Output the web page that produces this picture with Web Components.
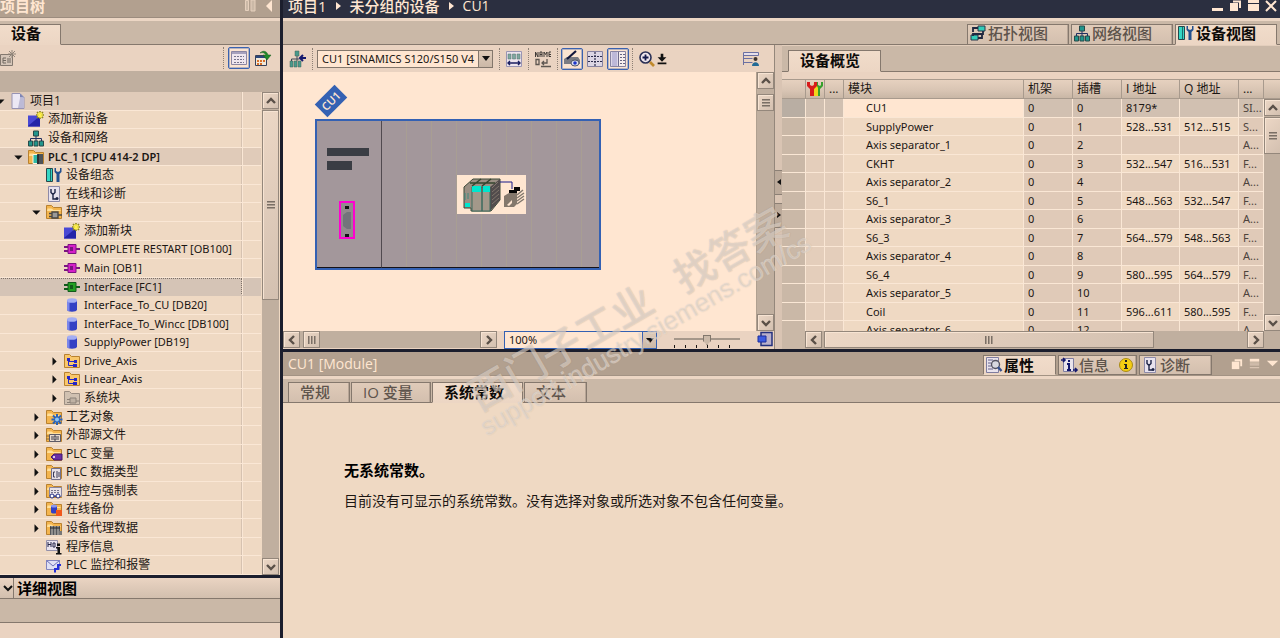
<!DOCTYPE html>
<html lang="zh-CN">
<head>
<meta charset="utf-8">
<title>项目1 - CU1</title>
<style>
:root{
  --ink:#1b1613;--paper:#ffe6d1;--panel:#efd9c3;--bar:#ead3c1;--strip:#cab8a7;--deep:#c0af9f;
  --title:#b2a08f;--night:#2b2f40;--line:#85786d;--blue:#3a62b0;
  font-family:"Open Sans","Noto Sans CJK SC",sans-serif;font-size:12px;line-height:16px;color:var(--ink);
}
body{margin:0;height:100vh;overflow:hidden;background:var(--panel)}
</style>
</head>
<body>
<tia-app></tia-app>
<script>
function define(name, html, ready){
  const t=document.createElement('template');
  t.innerHTML='<style>*{box-sizing:border-box}button,select,input{font:inherit;color:inherit;margin:0}button{background:none;border:0;padding:0}</style>'+html;
  customElements.define(name,class extends HTMLElement{
    connectedCallback(){
      if(this.shadowRoot)return;
      const r=this.attachShadow({mode:'open'});
      r.append(t.content.cloneNode(true));
      if(ready)ready.call(this,r);
    }
  });
}

const folder='<path d="M.5 1.5h5l2 2h8v11H.5z" fill="#f4b54e" stroke="#b9812e"/><path d="M1.5 4.5h4l2 1.500h7v1H1z" fill="#ffdf9a"/>';
const block=(a,b)=>`<path d="M0 6h5M0 10h5M11 8h5" stroke="${b}" stroke-width="2"/><path d="M4 3.500h8v9H4z" fill="${a}" stroke="${b}"/><path d="M6 6h3v4H6z" fill="${b}"/>`;
const star='<path d="M12 0v8M8 4h8M9 1l6 6M15 1L9 7" stroke="#8f8a18" stroke-width="1.600"/><path d="M12 1v6M9 4h6M10 2l4 4M14 2l-4 4" stroke="#fff04a" stroke-width="1.200"/>';
const db='<path d="M3 3.500v9c0 3 10 3 10 0v-9z" fill="#3340c4"/><path d="M3 3.500v9c0 1 1 1.500 2.500 2V4z" fill="#7a86ea"/><ellipse cx="8" cy="3.500" rx="5" ry="2.300" fill="#a3adf3"/>';
const group='<path d="M.5 1.5h5l2 2h8v11H.5z" fill="#f9c76b" stroke="#b9812e"/><path d="M4.500 7v5.500H9M5 8.500h5" stroke="#2525c8" fill="none" stroke-width="1"/><path d="M3 5h3v3H3zM10 7h3v3h-3zM9 11h4v3H9z" fill="#2525c8"/>';
const net='<path d="M5.500 1h5v5h-5zM.500 11h4v5h-4zM6 11h4v5H6zM11.500 11h4v5h-4z" fill="#21968c" stroke="#274a4a"/><path d="M8 6v5M2.500 11V8.500h11V11" stroke="#223060" fill="none"/>';
const dev='<path d="M.500 1.500h6v13h-6z" fill="#35d6c4" stroke="#26474b"/><path d="M4.500 2v12" stroke="#1c6d6b"/><path d="M8.500 1v4l2 2v8h3V7l2-2V1h-1.500v3l-2 1-2-1V1z" fill="#23508f"/>';
const diag='<path d="M2.500.500h11v15h-11z" fill="#e8e2ee" stroke="#8d8aa8"/><path d="M5 3v3.500l2 2 2-2V3M7 9v4h3" stroke="#1d2346" fill="none" stroke-width="1.400"/><circle cx="11" cy="12.500" r="1.500" fill="#1d2346"/>';
const grid='<path d="M.500 1.500h15v13H.500z" fill="#efe6ee" stroke="#8b86a3"/><path d="M1 2h14v2H1z" fill="#a7a1bd"/><path d="M3 6.500h10M3 9.500h10M3 12.500h10" stroke="#77748c" stroke-dasharray="2 1"/>';
const ICONS={
  page:'<path d="M2 .500h8l4 4v11H2z" fill="#ece8f5" stroke="#9793b4"/><path d="M10 .500l4 4h-4z" fill="#7d84b4"/><path d="M10 5h3.500v10H8z" fill="#bcbad6"/>',
  add:'<path d="M0 4.500h12v11H0z" fill="#4848d4"/><path d="M0 15L12 5v10.500H0z" fill="#2323a8"/>'+star,
  net,dev,diag,grid,db,group,
  plc:folder+'<path d="M5 5.500h5v9H5z" fill="#2fb8a6" stroke="#fff3dd"/><path d="M9 5h6v10H9z" fill="#4c535a"/><path d="M9 15V6l2-1v10z" fill="#2b2f33"/>',
  blocks:folder+'<path d="M6 8h6v6H6zM3 9.500h3M3 12.500h3M12 11h4" fill="#9b9a98" stroke="#4a4846" stroke-width="1.400"/>',
  sys:'<path d="M.500 1.500h5l2 2h8v11H.500z" fill="#d0c1b1" stroke="#9b8e82"/><path d="M6 8h6v5H6zM3 9.500h3M3 12.500h3M12 11h3" fill="#bfb2a4" stroke="#8c8278"/>',
  ob:block('#d420c8','#7a1480'),fc:block('#22a022','#125a1c'),
  tech:folder+'<path d="M11 5v11M5.500 10.500h11M7 6.500l8 8M15 6.500l-8 8" stroke="#2a62b8" stroke-width="2"/><circle cx="11" cy="10.500" r="2" fill="#8ec6f2"/>',
  ext:folder+'<path d="M3.500 7.500h11v7h-11z" fill="#e9dccf" stroke="#5c5a66"/><path d="M6 9v4M8 9h2v4H8zM12 9v4" stroke="#3a3a48" fill="none"/><path d="M0 9h3M0 12h3" stroke="#8b6b38"/>',
  tag:folder+'<path d="M5 11l3-3h8v6H8z" fill="#6a2fa5" stroke="#421770"/><circle cx="8" cy="11" r="1" fill="#fff"/>',
  type:folder+'<path d="M5.500 4.500h9v11h-9z" fill="#e5dfe6" stroke="#73718c"/><path d="M9 8H7.500v5H9M11 7v7M13 8v5" stroke="#3c3d58" fill="none"/>',
  watch:folder+'<path d="M3.500 4.500h12v9h-12z" fill="#e8e2e8" stroke="#8986a0"/><path d="M5 7.500h9M5 9.500h9" stroke="#77748c" stroke-dasharray="2 1"/><circle cx="6" cy="13" r="2" fill="#fff" stroke="#202a80"/><circle cx="12" cy="13" r="2" fill="#fff" stroke="#202a80"/><path d="M8 13h2" stroke="#202a80"/>',
  backup:folder+'<path d="M5 5v6c0 2 6 2 6 0V5z" fill="#3340c4"/><ellipse cx="8" cy="5" rx="3" ry="1.500" fill="#8e98ee"/><path d="M10 9h6v6h-6z" fill="#f0581c"/>',
  proxy:folder+'<path d="M4 6h10v9H4z" fill="#55585c"/><path d="M6 6v9M9 6v9M12 6v9" stroke="#c9c5bf"/><path d="M4 8h10" stroke="#26282b"/><path d="M13 11h3v4h-3z" fill="#777"/>',
  info:'<path d="M.500 1.500h11v10H.500z" fill="#e9e4ef" stroke="#9390aa"/><path d="M2 3v5M2 5.500h3M5 3v5M7 4h2v4H7z" stroke="#24264a" fill="none"/><path d="M11 8h3v6h1.500v1.500H10V14h1.500v-4.500H10V8zM11 4.500h3v2.500h-3z" fill="#111"/>',
  mail:'<path d="M.500 3.500h13v9H.500z" fill="#dfe0f4" stroke="#8184be"/><path d="M.500 3.500L7 9l6.500-5.500" stroke="#6c70b8" fill="none"/><path d="M9 15.500V12h3V8h3" stroke="#2530d8" stroke-width="2" fill="none"/>',
  newgrp:'<path d="M.500 4.500h12v11h-12z" fill="#d5c5b8" stroke="#83786f"/><path d="M3 8v5M3 8h3M3 10.500h3M3 13h3M8 8v5M10 8v5" stroke="#716860"/><path d="M12 0v8M8 4h8M9 1l6 6M15 1L9 7" stroke="#92867b"/>',
  export:'<path d="M.500 5.500h11v10H.500z" fill="#f2e8d8" stroke="#37405a"/><path d="M1 6h10v2H1z" fill="#2b477c"/><path d="M2 10h2v2H2zM5 10h2v2H5zM8 10h2v2H8zM2 13h2v2H2zM5 13h2v2H5z" fill="#d8702a"/><path d="M5 3c3-3 7-2 8 2h3l-4 5-4-5h3C10 3 8 2 5 3z" fill="#1f8a2a" stroke="#14591b" stroke-width=".500"/>',
  gonet:'<path d="M5 0h4v5H5zM0 10h3v6H0zM4 10h3v6H4zM8 10h3v6H8z" fill="#4a9a8c" stroke="#44605a" stroke-width=".500"/><path d="M7 5v5M1.500 10V8h8" stroke="#3f4656" fill="none"/><path d="M16 7h-5M13 4l-3 3 3 3" stroke="#15196e" stroke-width="2" fill="none"/>',
  modules:'<path d="M.500.500h15v15H.500z" fill="#ece3ec" stroke="#9a95b3"/><path d="M2 3h3v5H2zM6.500 3h3v5h-3zM11 3h3v5h-3z" fill="#7fa8a0" stroke="#55706c" stroke-width=".500"/><path d="M2 12h12M4 10l-2 2 2 2M12 10l2 2-2 2" stroke="#1a1e60" stroke-width="1.400" fill="none"/>',
  name:'<path d="M.500 6V1l2.500 5V1M5 6V1h2v5M5 3.500h2M9 6V1l1.500 2.500L12 1v5M16 1h-2v4.500h2M14 3.500h2" stroke="#3f3a36" fill="none"/><path d="M1 8.500h3v5H1zM12 8v4H7M9 10l-2 2 2 2M6 15.500h10" stroke="#5e5751" fill="none" stroke-width="1.300"/>',
  edit:'<path d="M0 8l3-2h11l2 3v4H0z" fill="#7a7b83"/><path d="M3 8L12 0" stroke="#11163c" stroke-width="2.200"/><ellipse cx="11" cy="12" rx="4" ry="3" fill="#dfe3f2" stroke="#4d5568"/><circle cx="11" cy="12" r="1.800" fill="#1d36c8"/>',
  dots:'<path d="M.500.500h15v15H.500z" fill="#dcd6e4" stroke="#8884a2"/><path d="M8 1v14M1 5.500h14M1 10.500h14" stroke="#2d2d4c" stroke-dasharray="2 1" stroke-width="1.200"/>',
  pane:'<path d="M.500.500h15v15H.500z" fill="#ddd7e8" stroke="#8884a2"/><path d="M2 1h5v14H2z" fill="#bdb8d8"/><path d="M8 1h7v14H8z" fill="#f6eeee"/><path d="M8.500 1v14" stroke="#6d6a8a"/><path d="M10 3.500h5M10 6.500h5M10 9.500h5M10 12.500h5" stroke="#666380" stroke-dasharray="2 1"/>',
  zoom:'<circle cx="6.500" cy="6.500" r="5.500" fill="#efe6ec" stroke="#2b3156" stroke-width="1.600"/><path d="M3.500 6.500h6M6.500 3.500v6" stroke="#141a4c" stroke-width="1.800"/><path d="M11 11l4 4" stroke="#c08a2c" stroke-width="2.600"/>',
  fit:'<path d="M6.500 2h3v4H13l-5 5-5-5h3.500zM3 12h10v2H3z" fill="#111"/>',
  user:'<path d="M.500 1.500h15v3H.500zM.500 7.500h9M.500 11.500h9M.500 2v12" fill="#e6dfea" stroke="#6b70a2"/><circle cx="12.500" cy="8" r="2" fill="#3e3430"/><path d="M9 15c0-5 7-5 7 0z" fill="#236b96"/>',
  topo:'<path d="M8 1h7v5H8zM1 10h7v5H1z" fill="#32ccb8" stroke="#29374a"/><path d="M8 3H3v4M13 6v3H3v2M8 13h4V9" stroke="#1f2740" stroke-width="1.800" fill="none"/>',
  wrench:'<path d="M9 1v4l1 2v8h3V8l3-3V1h-2v3l-1 1-2-1V1z" fill="#35a02c"/><path d="M7 1l3 4 1 2v8H6V8z" fill="#f3d51c"/><path d="M0 1v4l3 3v7h4V8l3-3V1H7v3L5 5 3 4V1z" fill="#d81c1c"/>',
  props:'<path d="M.500.500h12v15H.500z" fill="#e9e3ec" stroke="#7f7da0"/><path d="M2 3h5M2 6h3M2 9h3M2 12h5" stroke="#62618a"/><circle cx="9.500" cy="7.500" r="4" fill="#d8d8e0" stroke="#555361" stroke-width="1.400"/><path d="M12 10l3.500 4" stroke="#35508f" stroke-width="2.400"/>',
  msg:'<path d="M2.500 1.500h10v13h-10z" fill="#e9e3ec" stroke="#7f7da0"/><path d="M0 3h4M2 1l2 2-2 2M12 13h4M14 11l2 2-2 2" stroke="#15196e" stroke-width="1.600" fill="none"/><path d="M8 3v2M6 7h2v6M6 13h4" stroke="#15196e" stroke-width="2" fill="none"/>',
  corner:'<path d="M4 1.500h11v13H4z" fill="#b9b0ca" stroke="#23307e" stroke-width="1.500"/><path d="M1 5h8v6H1z" fill="#3c5be0" stroke="#1c2f9c"/>',
  left:'<path d="M10 4L6 8l4 4" stroke="#5a5048" stroke-width="2.400" fill="none"/>',
  right:'<path d="M6 4l4 4-4 4" stroke="#5a5048" stroke-width="2.400" fill="none"/>',
  up:'<path d="M4 10l4-4 4 4" stroke="#5a5048" stroke-width="2.400" fill="none"/>',
  down:'<path d="M4 6l4 4 4-4" stroke="#5a5048" stroke-width="2.400" fill="none"/>',
  chev:'<path d="M4 6l4 4 4-4" stroke="#111" stroke-width="2" fill="none"/>',
  closed:'<path d="M6 3l5.500 5.500L6 14z" fill="#111"/>',
  open:'<path d="M3 6h11l-5.500 5.500z" fill="#111"/>',
  wmin:'<path d="M3 11h11v3H3z" fill="#ffe6d1"/>',
  wdup:'<path d="M3 6h8v8H3z" fill="#ffe6d1"/><path d="M6 4.500h7V11" stroke="#ffe6d1" stroke-width="2" fill="none"/>',
  wmax:'<path d="M3 3h11v3H3zM3 7h11v7H3z" fill="#ffe6d1"/>',
  wx:'<path d="M3 4l10 10M13 4L3 14" stroke="#ffe6d1" stroke-width="2"/>',
  wlist:'<path d="M3 3h10v3H3z" fill="#ffe6d1"/><path d="M3 7.500h10M3 9.500h10M3 12.500h10" stroke="#e8d2bf"/>',
  wtri:'<path d="M2 5h12l-6 6z" fill="#ffe6d1"/>',
  badge:'<circle cx="8" cy="8" r="6.500" fill="#f4cd12" stroke="#a88a18"/><path d="M7 3h2v2H7zM6 7h3v4h1v1H6v-1h1V8H6z" fill="#222"/>'
};
define('tia-icon','<style>:host{display:block;flex:none;width:16px;height:16px}svg{display:block;width:100%;height:100%;overflow:visible}</style><svg viewBox="0 0 16 16" aria-hidden="true"></svg>',function(r){
  r.querySelector('svg').innerHTML=ICONS[this.getAttribute('name')]||'';
});

/* One tab of a tab strip; "on" marks the selected one. */
define('tia-tab',`<style>
:host{display:block;font-size:15px;font-weight:500;color:#5e544c}
:host([on]){color:#0c0a08;font-weight:700}
button{display:flex;align-items:center;gap:2px;width:100%;height:100%;padding:var(--tab-pad,0 11px 4px);white-space:nowrap;
 background:linear-gradient(#e0cbb9,#d3bfae);border:1px solid var(--line);box-shadow:inset -1px 0 #b7a596}
:host([on]) button{background:linear-gradient(#f1dcca,#ecd6c4);border-bottom-color:#ecd6c4;box-shadow:none}
</style><button type="button" role="tab"><slot></slot></button>`,function(r){
  r.querySelector('button').setAttribute('aria-selected',this.hasAttribute('on'));
});

/* Scrollbar: --lead is the gap before the thumb, --thumb its length. */
define('tia-scroll',`<style>
:host{display:flex;flex-direction:column;background:var(--deep);width:17px}
:host([across]){flex-direction:row;width:auto;height:17px}
button,.thumb{flex:none;display:grid;place-items:center;width:17px;height:17px;border:1px solid #94877b;background:linear-gradient(135deg,#ecd7c5,#d3c0b0);box-shadow:inset 1px 1px #f7e4d3;overflow:hidden}
.thumb{height:var(--thumb);margin-top:var(--lead)}
:host([across]) .thumb{height:17px;width:var(--thumb);margin:0 0 0 var(--lead)}
.rest{flex:1}
.grip{width:8px;height:8px;background:repeating-linear-gradient(#7b6f65 0 1px,#a99b8e 1px 2px,transparent 2px 3px)}
:host([across]) .grip{background:repeating-linear-gradient(90deg,#7b6f65 0 1px,#a99b8e 1px 2px,transparent 2px 3px)}
</style><button type="button"></button><div class="thumb"><div class="grip"></div></div><div class="rest"></div><button type="button"></button>`,function(r){
  const h=this.hasAttribute('across'),i=r.querySelectorAll('button');
  [[i[0],h?'left':'up'],[i[1],h?'right':'down']].forEach(([b,n])=>{b.innerHTML=`<tia-icon name="${n}"></tia-icon>`;b.setAttribute('aria-label',n)});
});

define('tia-combo',`<style>
:host{display:block;position:relative;height:18px;font-family:"Noto Sans","Noto Sans CJK SC",sans-serif;font-size:11px}
select{appearance:none;width:100%;height:100%;border:1px solid var(--combo-line,#83776c);border-radius:0;background:var(--paper);padding:0 15px 0 4px;overflow:hidden;text-overflow:clip;white-space:nowrap}
span{position:absolute;right:1px;top:1px;bottom:1px;width:14px;background:linear-gradient(#e0ccba,#cbb8a7);border-left:1px solid var(--combo-line,#83776c);pointer-events:none;display:grid;place-items:center}
</style><select><option></option></select><span><svg width="8" height="5" viewBox="0 0 8 5"><path d="M0 0h8L4 5z" fill="#111"/></svg></span>`,function(r){
  r.querySelector('option').textContent=this.getAttribute('value');
  r.querySelector('select').setAttribute('aria-label',this.getAttribute('label'));
});

define('tia-tool',`<style>
:host{display:block;width:22px;height:22px;flex:none}
button{width:100%;height:100%;display:grid;place-items:center;border:1px solid transparent}
:host([on]) button{border:1px solid var(--blue);border-radius:2px;background:#fbe4d1;box-shadow:inset 0 0 0 1px #b5b3c0}
</style><button type="button"></button>`,function(r){
  const b=r.querySelector('button');b.setAttribute('aria-label',this.getAttribute('icon'));
  b.innerHTML=`<tia-icon name="${this.getAttribute('icon')}"></tia-icon>`;
});

define('tia-tree-row',`<style>
:host{display:grid;grid-template-columns:1fr 19px;background:var(--panel);border-bottom:1px solid #fae7d5;overflow:hidden;min-height:0}
:host([head]){background:#e0cbb9}
:host([sel]){background:#d5c4b6;border-bottom-color:#d5c4b6}
.main{display:flex;align-items:center;min-width:0;white-space:nowrap;border-right:1px solid #d6c2b0}
:host([sel]) .main{border:1px dotted #7c7067;border-left:0}
.arrow{width:12px;margin:0 4px 0 -2px;flex:none;display:flex}
.arrow tia-icon{width:12px;height:12px}
.pic{width:16px;height:16px;margin-right:4px}
.side{border-left:1px solid #fae7d5}
:host([latin]){font-family:"Noto Sans",sans-serif;font-size:11px}
:host([bold]) .text{font-weight:600}
</style><div class="main"><span class="arrow"></span><span class="text"><slot></slot></span></div><div class="side"></div>`,function(r){
  const g=n=>this.getAttribute(n);
  r.querySelector('.main').style.paddingLeft=18*g('level')+'px';
  if(g('state'))r.querySelector('.arrow').innerHTML=`<tia-icon name="${g('state')}"></tia-icon>`;
  const p=document.createElement('tia-icon');p.className='pic';p.setAttribute('name',g('icon'));
  r.querySelector('.text').before(p);
});

const TREE=[
 [0,'open','page','项目1','head'],[1,'','add','添加新设备'],[1,'','net','设备和网络'],[1,'open','plc','PLC_1 [CPU 414-2 DP]','head bold latin'],
 [2,'','dev','设备组态'],[2,'','diag','在线和诊断'],[2,'open','blocks','程序块'],[3,'','add','添加新块'],
 [3,'','ob','COMPLETE RESTART [OB100]','latin'],[3,'','ob','Main [OB1]','latin'],[3,'','fc','InterFace [FC1]','sel latin'],
 [3,'','db','InterFace_To_CU [DB20]','latin'],[3,'','db','InterFace_To_Wincc [DB100]','latin'],[3,'','db','SupplyPower [DB19]','latin'],
 [3,'closed','group','Drive_Axis','latin'],[3,'closed','group','Linear_Axis','latin'],[3,'closed','sys','系统块'],
 [2,'closed','tech','工艺对象'],[2,'closed','ext','外部源文件'],[2,'closed','tag','PLC 变量'],[2,'closed','type','PLC 数据类型'],
 [2,'closed','watch','监控与强制表'],[2,'closed','backup','在线备份'],[2,'closed','proxy','设备代理数据'],[2,'','info','程序信息'],[2,'','mail','PLC 监控和报警']];

define('tia-project-panel',`<style>
:host{display:flex;flex-direction:column;min-height:0;background:var(--panel)}
.title{height:18px;display:flex;align-items:center;background:var(--title);color:var(--paper);font-size:15px;font-weight:700;line-height:12px;padding:0 7px 5px 0;border-bottom:1px solid #9c8c7e}
.title span{flex:1}.title svg{flex:none}
.tabs{height:27px;display:flex;padding-top:3px;background:var(--strip);border-top:3px solid #ecd6c4;border-bottom:1px solid var(--line);background-clip:padding-box}
.tabs tia-tab{width:62px;margin-left:-1px;margin-bottom:-1px;--tab-pad:0 11px 3px}
.tools{height:26px;display:flex;align-items:center;gap:2px;background:var(--bar);padding-right:6px}
.tools i{flex:1}
.sep{border-left:1px dotted #8d8075;height:22px;padding-left:2px}
.gap{height:21px;background:var(--deep)}
.body{flex:1;display:flex;min-height:0}
.tree{flex:1;display:grid;grid-auto-rows:minmax(18px,1fr);overflow:hidden;min-width:0}
.tree tia-tree-row{margin-left:-4px}
tia-scroll{--lead:1px;--thumb:190px;margin:0 1px}
.detail{border-top:3px solid #1b1e2d;height:24px;display:flex;align-items:center;background:linear-gradient(#ead4c2,#d2bfae);border-bottom:1px solid var(--line);font-size:15px;font-weight:700;color:#000}
.detail button{height:100%;width:14px;border-right:1px solid var(--line);margin-right:3px;display:grid;place-items:center end;padding:0}
.strip{height:24px;background:var(--strip);border-bottom:1px solid var(--line)}
.foot{height:15px;background:var(--bar)}
</style>
<div class="title"><span>项目树</span><svg width="28" height="12" viewBox="0 0 28 12"><path d="M.500.500h3v10h-3zM6 0h4v11H6z" fill="#cbb9a7" stroke="#e6d0bd"/><path d="M27 0v12l-6-6z" fill="#ffe6d1"/></svg></div>
<div class="tabs" role="tablist"><tia-tab on>设备</tia-tab></div>
<div class="tools"><tia-icon name="newgrp"></tia-icon><i></i><span class="sep"></span><tia-tool icon="grid" on></tia-tool><tia-tool icon="export"></tia-tool></div>
<div class="gap"></div>
<div class="body"><div class="tree"></div><tia-scroll></tia-scroll></div>
<div class="detail"><button type="button" aria-label="展开"><tia-icon name="chev"></tia-icon></button>详细视图</div>
<div class="strip"></div><div class="foot"></div>`,function(r){
  r.querySelector('.tree').innerHTML=TREE.map(([l,s,i,t,f=''])=>`<tia-tree-row level="${l}" state="${s}" icon="${i}" ${f}>${t}</tia-tree-row>`).join('');
});

/* The module as drawn on the device canvas. */
define('tia-device',`<style>
:host{display:block;width:287px;padding-left:1px}
.tag{width:28px;height:18px;margin:0 0 9px 2px;background:#3461b3;color:var(--paper);font-size:11px;font-weight:600;line-height:18px;text-align:center;transform:rotate(-45deg)}
.box{display:flex;height:151px;border:2px solid #3461b3;background:#a3979b}
.face,.slots{border-bottom:1px solid #151217}
.face{width:65px;border-right:1px solid #514a50;padding:27px 0 0 10px}
.a,.b{background:#3a3d44;height:8px;width:42px;margin-bottom:5px}.b{width:25px;height:9px}
.port{display:block;margin:31px 0 0 12px}
.slots{flex:1;display:grid;place-items:center;padding:1px 0 0 2px;background:repeating-linear-gradient(90deg,transparent 0 24px,#a89e93 24px 25px)}
.pic{display:block;background:var(--paper)}
</style>
<div class="tag">CU1</div>
<div class="box"><div class="face"><div class="a"></div><div class="b"></div>
<svg class="port" width="16" height="38" viewBox="0 0 16 38"><path d="M1 1h14v36H1z" fill="#938a8e" stroke="#ff00d0" stroke-width="2"/><path d="M12 11v17H8l-4-3V14l4-3z" fill="#73747b"/><path d="M6 5h4v3H6zM6 33h4v3H6z" fill="#111"/></svg></div>
<div class="slots"><svg class="pic" width="69" height="39" viewBox="0 0 69 39">
<path d="M7 12l9-8h27v21l-9 11H14v-3H7z" fill="#9a8f83" stroke="#3b4837"/><path d="M33 12l10-8v21l-10 11z" fill="#514b4c"/><path d="M35 13l6-6M35 17l7-6M35 21l7-6M35 25l7-6M35 29l7-6" stroke="#80766b"/><path d="M15 12h10v24H15zM25 12h8v24h-8z" fill="#a3988a" stroke="#3c6a5e"/><path d="M15 11h9v6h-9zM26 11h7v6h-7zM8 28h5v4H8z" fill="#00e6ce"/><path d="M15 11l9-7M25 11l9-7M13 8h25" stroke="#35452f" stroke-width="1.500"/><path d="M8 18v7M11 18v6" stroke="#3d8b7e"/>
<path d="M43 7h12v7" stroke="#16188a" fill="none"/><path d="M52 15h5v-3h6v4h-3v2h-8z" fill="#070707"/><path d="M47 21l5-3h8v11l-3 3H47z" fill="#84786c"/><path d="M50 30l5-5v3l-3 3z" fill="#ffe6d1"/><path d="M60 20l6-5M60 23l7-5M60 26l7-5M60 29l7-5" stroke="#82786e" stroke-width="1.500"/></svg></div></div>`);

define('tia-editor',`<style>
:host{display:flex;flex-direction:column;min-width:0;background:var(--paper)}
.tools{height:27px;display:flex;align-items:center;background:var(--bar);padding:0 15px 0 4px}
.tools i{flex:1}
.sep{border-left:1px dotted #8d8075;height:22px;margin:0 3px}
.tools tia-combo{width:176px;margin:0 3px 0 1px}
.pair{margin-left:1px}
.fit{width:14px;height:14px;margin-left:-3px}
.view{flex:1;display:flex;min-height:0}
.canvas{flex:1;padding:20px 0 0 31px}
.view tia-scroll{--lead:5px;--thumb:17px;border-left:1px solid #b0a090;width:18px}
.foot{height:18px;display:flex;align-items:flex-start;background:var(--bar)}
.foot tia-scroll{flex:0 1 214px;--lead:3px;--thumb:17px}
.foot tia-combo{flex:0 1 153px;margin-left:7px;--combo-line:#3461b3}
.range{width:66px;margin-left:17px;height:17px}
input{appearance:none;width:66px;height:17px;background:repeating-linear-gradient(90deg,#1b1613 0 1px,transparent 1px 11px) 0 100%/66px 3px no-repeat,linear-gradient(#a5978a,#a5978a) 0 7px/66px 2px no-repeat;display:block}
input::-webkit-slider-thumb{appearance:none;width:8px;height:10px;background:#cbb9a8;border:1px solid #82776c;clip-path:polygon(0 0,100% 0,100% 60%,50% 100%,0 60%)}
.foot i{flex:1}
.foot tia-icon{margin:0 1px 0 0}
</style>
<div class="tools"><tia-tool icon="gonet"></tia-tool><span class="sep"></span><tia-combo label="设备" value="CU1 [SINAMICS S120/S150 V4"></tia-combo><span class="sep"></span><tia-tool icon="modules"></tia-tool><span class="sep"></span><tia-tool icon="name"></tia-tool><span class="sep"></span><tia-tool icon="edit" on></tia-tool><tia-tool class="pair" icon="dots"></tia-tool><tia-tool class="pair" icon="pane" on></tia-tool><span class="sep"></span><tia-tool icon="zoom"></tia-tool><tia-icon class="fit" name="fit"></tia-icon><i></i><tia-icon name="user"></tia-icon></div>
<div class="view"><div class="canvas"><tia-device></tia-device></div><tia-scroll></tia-scroll></div>
<div class="foot"><tia-scroll across></tia-scroll><tia-combo label="缩放" value="100%"></tia-combo><div class="range"><input type="range" aria-label="缩放" min="0" max="6" value="3"></div><i></i><tia-icon name="corner"></tia-icon></div>`);

const ROWS=[['CU1',0,'8179*','','SI...'],['SupplyPower',1,'528...531','512...515','S...'],['Axis separator_1',2,'','','A...'],['CKHT',3,'532...547','516...531','F...'],['Axis separator_2',4,'','','A...'],['S6_1',5,'548...563','532...547','F...'],['Axis separator_3',6,'','','A...'],['S6_3',7,'564...579','548...563','F...'],['Axis separator_4',8,'','','A...'],['S6_4',9,'580...595','564...579','F...'],['Axis separator_5',10,'','','A...'],['Coil',11,'596...611','580...595','F...'],['Axis separator_6',12,'','','A...']];
define('tia-overview',`<style>
:host{display:flex;flex-direction:column;min-width:0;background:var(--bar)}
.tabs{height:27px;display:flex;padding:4px 0 0 6px;background:var(--strip);border-top:1px solid #e3cebc;border-bottom:1px solid var(--line)}
.tabs tia-tab{width:93px;margin-bottom:-1px;--tab-pad:0 11px 3px}
.grid{flex:1;display:grid;grid-template-columns:1fr 16px;grid-template-rows:1fr 18px;margin-top:7px;min-height:0}
.clip{overflow:hidden;min-height:0;height:100%;contain:size}
table{width:100%;table-layout:fixed;border-collapse:separate;border-spacing:0}
th,td{padding:0 0 0 4px;text-align:left;font-weight:400;white-space:nowrap;overflow:hidden;height:18px;line-height:16px;border:solid #fae7d5;border-width:0 1px 1px 0}
tr:nth-child(odd) td{height:19px}
th{height:20px;background:linear-gradient(#e6d1bf,#d8c4b3 60%,#c9b7a6);border:solid #a89a8d;border-width:1px 1px 1px 0}
td{background:#e0cab8;font-family:"Noto Sans",sans-serif;font-size:11px}
td:first-child{background:#cab8a7}
td:nth-child(4){background:var(--panel);padding-left:22px}
td:nth-child(2),td:nth-child(3){background:#e4cebb}
td.val{background:var(--panel)}
tr.sel td{background:#d1c0b1}tr.sel td:first-child{background:#b9aea3}tr.sel td:nth-child(4){background:var(--paper)}
td:last-child{color:#4d433c}
th.pic{padding:0 0 0 1px}
.bar{display:flex;flex-direction:column}
.bar div{height:20px;background:linear-gradient(#e6d1bf,#c9b7a6);border:solid #a89a8d;border-width:1px 0}
.bar tia-scroll{flex:1;--lead:1px;--thumb:37px;width:16px}
.foot{grid-column:1/3;display:flex;background:var(--deep)}
.foot span{width:23px;background:var(--strip)}
.foot tia-scroll{flex:1;margin-right:16px;--lead:2px;--thumb:72%}
</style>
<div class="tabs" role="tablist"><tia-tab on>设备概览</tia-tab></div>
<div class="grid"><div class="clip"><table><colgroup><col style="width:24px"><col style="width:19px"><col style="width:19px"><col><col style="width:49px"><col style="width:49px"><col style="width:58px"><col style="width:59px"><col style="width:25px"></colgroup>
<thead><tr><th></th><th class="pic"><tia-icon name="wrench"></tia-icon></th><th>...</th><th>模块</th><th>机架</th><th>插槽</th><th>I 地址</th><th>Q 地址</th><th>...</th></tr></thead><tbody></tbody></table></div>
<div class="bar"><div></div><tia-scroll></tia-scroll></div><div class="foot"><span></span><tia-scroll across></tia-scroll></div></div>`,function(r){
  r.querySelector('tbody').innerHTML=ROWS.map(([n,s,i,q,t],k)=>`<tr class="${k?'':'sel'}"><td></td><td></td><td></td><td>${n}</td><td>0</td><td>${s}</td><td class="${i?'val':''}">${i}</td><td class="${q?'val':''}">${q}</td><td>${t}</td></tr>`).join('');
});

define('tia-splitter',`<style>
:host{display:flex;flex-direction:column;justify-content:center;gap:8px;width:8px;padding-top:3px;background:#d9c4b3;border-left:1px solid #94877b}
button{height:25px;background:#bcaa9a;border:solid #8c8075;border-width:1px 0;display:grid;place-items:center}
svg{display:block}
</style><button type="button" aria-label="向左"><svg width="4" height="6"><path d="M4 0v6L0 3z" fill="#111"/></svg></button><button type="button" aria-label="向右"><svg width="4" height="6"><path d="M0 0v6l4-3z" fill="#111"/></svg></button>`);

define('tia-inspector',`<style>
:host{display:flex;flex-direction:column;min-height:0;background:var(--panel)}
.title{height:24px;display:flex;align-items:flex-end;background:var(--title);border-bottom:1px solid #a39384}
.title h2{flex:1;margin:0;padding-left:5px;font-size:14px;font-weight:400;line-height:23px;color:var(--paper)}
.title tia-tab{height:20px;width:73px;margin-right:2px;--tab-pad:0 2px}
.title .w{width:79px}
.title tia-tab:last-of-type{margin-right:17px}
.badge{margin-left:7px}
.win{display:flex;gap:3px;padding-bottom:4px}.win tia-icon{width:15px;height:15px}
.tabs{height:27px;display:flex;gap:1px;padding:3px 0 0 5px;background:var(--strip);background-clip:padding-box;border-top:3px solid #ecd6c4;border-bottom:1px solid var(--line)}
.tabs tia-tab{margin-bottom:-1px;--tab-pad:0 11px 2px}
.body{padding:57px 61px;color:#1b1613}
h3{margin:0 0 10px;font-size:15px;line-height:20px;font-weight:700;color:#000}
p{margin:0;font-size:14px;line-height:22px}
</style>
<div class="title"><h2>CU1 [Module]</h2><tia-tab on><tia-icon name="props"></tia-icon>属性</tia-tab><tia-tab class="w"><tia-icon name="msg"></tia-icon>信息<tia-icon class="badge" name="badge"></tia-icon></tia-tab><tia-tab><tia-icon name="diag"></tia-icon>诊断</tia-tab><div class="win"><tia-icon name="wdup"></tia-icon><tia-icon name="wlist"></tia-icon><tia-icon name="wtri"></tia-icon></div></div>
<div class="tabs" role="tablist"><tia-tab style="width:62px">常规</tia-tab><tia-tab style="width:80px">IO 变量</tia-tab><tia-tab on style="width:91px">系统常数</tia-tab><tia-tab style="width:63px">文本</tia-tab></div>
<div class="body"><h3>无系统常数。</h3><p>目前没有可显示的系统常数。没有选择对象或所选对象不包含任何变量。</p></div>`);

define('tia-watermark',`<style>
:host{position:absolute;left:461px;top:379px;transform:rotate(-30deg);transform-origin:0 0;pointer-events:none;color:rgba(255,246,238,.46);text-shadow:0 0 1px rgba(130,115,102,.45);white-space:nowrap}
.cn{font-size:41px;line-height:44px;font-weight:500}.cn span{margin-left:31px}
.en{font:26px/28px "Liberation Sans",Arial,sans-serif;-webkit-text-stroke:1px rgba(255,246,238,.2);margin:-4px 0 0 -6px}
</style><div class="cn">西门子工业<span>找答案</span></div><div class="en">support.industry.siemens.com/cs</div>`);

define('tia-workspace',`<style>
:host{display:flex;flex-direction:column;min-width:0;min-height:0}
.title{height:18px;display:flex;align-items:flex-start;background:var(--night);color:var(--paper);padding:0 1px 0 5px}
nav{flex:1;display:flex;gap:8px;align-items:center;font-size:15px;line-height:12px;font-weight:500}
a{color:inherit;text-decoration:none}
.unit{font-size:14px}
nav svg{display:block;margin:0 1px}
.win{display:flex;gap:2px;margin-top:-3px}
.tabs{height:27px;display:flex;justify-content:flex-end;gap:2px;padding:3px 3px 0;background:var(--strip);background-clip:padding-box;border-top:3px solid #ecd6c4;border-bottom:1px solid var(--line)}
.tabs tia-tab{width:102px;margin-bottom:-1px;--tab-pad:0 2px 3px}
.work{flex:305 1 0;display:flex;min-height:0}
tia-editor{flex:491 1 0}tia-overview{flex:498 1 0}
tia-inspector{flex:286 1 0;border-top:3px solid #1b1e2d}
</style>
<div class="title"><nav><a href="#p">项目1</a><svg width="5" height="8"><path d="M0 0v8l5-4z" fill="#ffe6d1"/></svg><a href="#u">未分组的设备</a><svg width="5" height="8"><path d="M0 0v8l5-4z" fill="#ffe6d1"/></svg><a class="unit" href="#c">CU1</a></nav><div class="win"><tia-icon name="wmin"></tia-icon><tia-icon name="wdup"></tia-icon><tia-icon name="wmax"></tia-icon><tia-icon name="wx"></tia-icon></div></div>
<div class="tabs" role="tablist"><tia-tab><tia-icon name="topo"></tia-icon>拓扑视图</tia-tab><tia-tab><tia-icon name="net"></tia-icon>网络视图</tia-tab><tia-tab on><tia-icon name="dev"></tia-icon>设备视图</tia-tab></div>
<div class="work"><tia-editor></tia-editor><tia-splitter></tia-splitter><tia-overview></tia-overview></div>
<tia-inspector></tia-inspector>`);

define('tia-app',`<style>
:host{display:grid;grid-template-columns:280px 1fr;column-gap:3px;height:100%;background:#1b1e2d;position:relative;overflow:hidden}
</style><tia-project-panel></tia-project-panel><tia-workspace></tia-workspace><tia-watermark></tia-watermark>`);
</script>
</body>
</html>
